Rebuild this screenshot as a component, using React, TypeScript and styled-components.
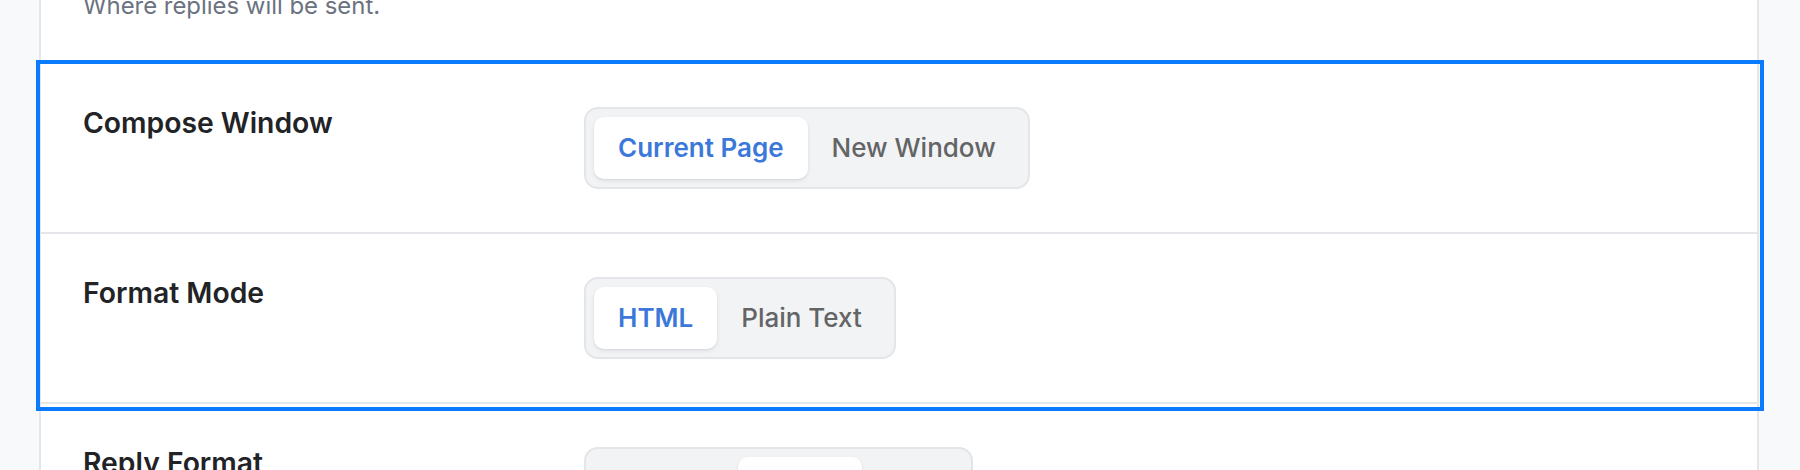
import React, { useState } from "react";
import styled, { createGlobalStyle, css } from "styled-components";

const GlobalStyle = createGlobalStyle`
  html, body {
    margin: 0;
    padding: 0;
    background: #f8f9fb;
    font-family: Inter, "Noto Sans", "Liberation Sans", sans-serif;
    -webkit-font-smoothing: antialiased;
  }
  * { box-sizing: border-box; }
`;

const Page = styled.div`
  width: 1800px;
  height: 470px;
  overflow: hidden;
`;

const Card = styled.div`
  margin: -96px 41px 0 39px;
  background: #ffffff;
  border-left: 2px solid #e5e6ea;
  border-right: 2px solid #e5e6ea;
`;

const Section = styled.section<{ $focused?: boolean }>`
  position: relative;
  ${(p) =>
    p.$focused &&
    css`
      &::after {
        content: "";
        position: absolute;
        top: -4px;
        left: -5px;
        right: -7px;
        bottom: -7px;
        border: 4px solid #0a7bff;
        pointer-events: none;
        z-index: 2;
      }
    `}
`;

const Row = styled.div<{ $tailPad?: number }>`
  display: grid;
  grid-template-columns: 458px 1fr;
  column-gap: 43px;
  align-items: start;
  padding: 43px 42px ${(p) => p.$tailPad ?? 43}px;
  border-bottom: 2px solid #e5e6ea;
`;

const Info = styled.div`
  display: flex;
  flex-direction: column;
  gap: 7px;
`;

const Label = styled.div`
  font-size: 28.3px;
  line-height: 1.2;
  font-weight: 600;
  color: #222326;
`;

const Hint = styled.div`
  font-size: 23.9px;
  line-height: 1.5;
  font-weight: 400;
  color: #6b7280;
`;

const Segmented = styled.div`
  display: inline-flex;
  align-items: center;
  justify-self: start;
  padding: 8px;
  background: #f2f3f5;
  border: 2px solid #e4e5e9;
  border-radius: 14px;
`;

const Option = styled.button<{ $active?: boolean }>`
  height: 62px;
  display: flex;
  align-items: center;
  padding: 0 24px;
  border: none;
  border-radius: 10px;
  font-family: inherit;
  font-size: 26px;
  cursor: pointer;
  white-space: nowrap;
  background: ${(p) => (p.$active ? "#ffffff" : "transparent")};
  color: ${(p) => (p.$active ? "#3b78da" : "#636466")};
  font-weight: ${(p) => (p.$active ? 600 : 500)};
  box-shadow: ${(p) =>
    p.$active ? "0 2px 4px rgba(15, 23, 42, 0.08), 0 1px 2px rgba(15, 23, 42, 0.06)" : "none"};
`;

type SegProps = { options: string[]; initial: number };

function SegmentedControl({ options, initial }: SegProps) {
  const [value, setValue] = useState(initial);
  return (
    <Segmented role="tablist">
      {options.map((o, i) => (
        <Option key={o} $active={i === value} onClick={() => setValue(i)}>
          {o}
        </Option>
      ))}
    </Segmented>
  );
}

export default function App() {
  return (
    <Page>
      <GlobalStyle />
      <Card>
        <Row $tailPad={38}>
          <Info>
            <Label>Reply-To Address</Label>
            <Hint>Where replies will be sent.</Hint>
          </Info>
          <div />
        </Row>
        <Section $focused>
          <Row>
            <Label>Compose Window</Label>
            <SegmentedControl options={["Current Page", "New Window"]} initial={0} />
          </Row>
          <Row>
            <Label>Format Mode</Label>
            <SegmentedControl options={["HTML", "Plain Text"]} initial={0} />
          </Row>
        </Section>
        <Row>
          <Label>Reply Format</Label>
          <SegmentedControl options={["Original", "HTML", "Text"]} initial={1} />
        </Row>
      </Card>
    </Page>
  );
}
